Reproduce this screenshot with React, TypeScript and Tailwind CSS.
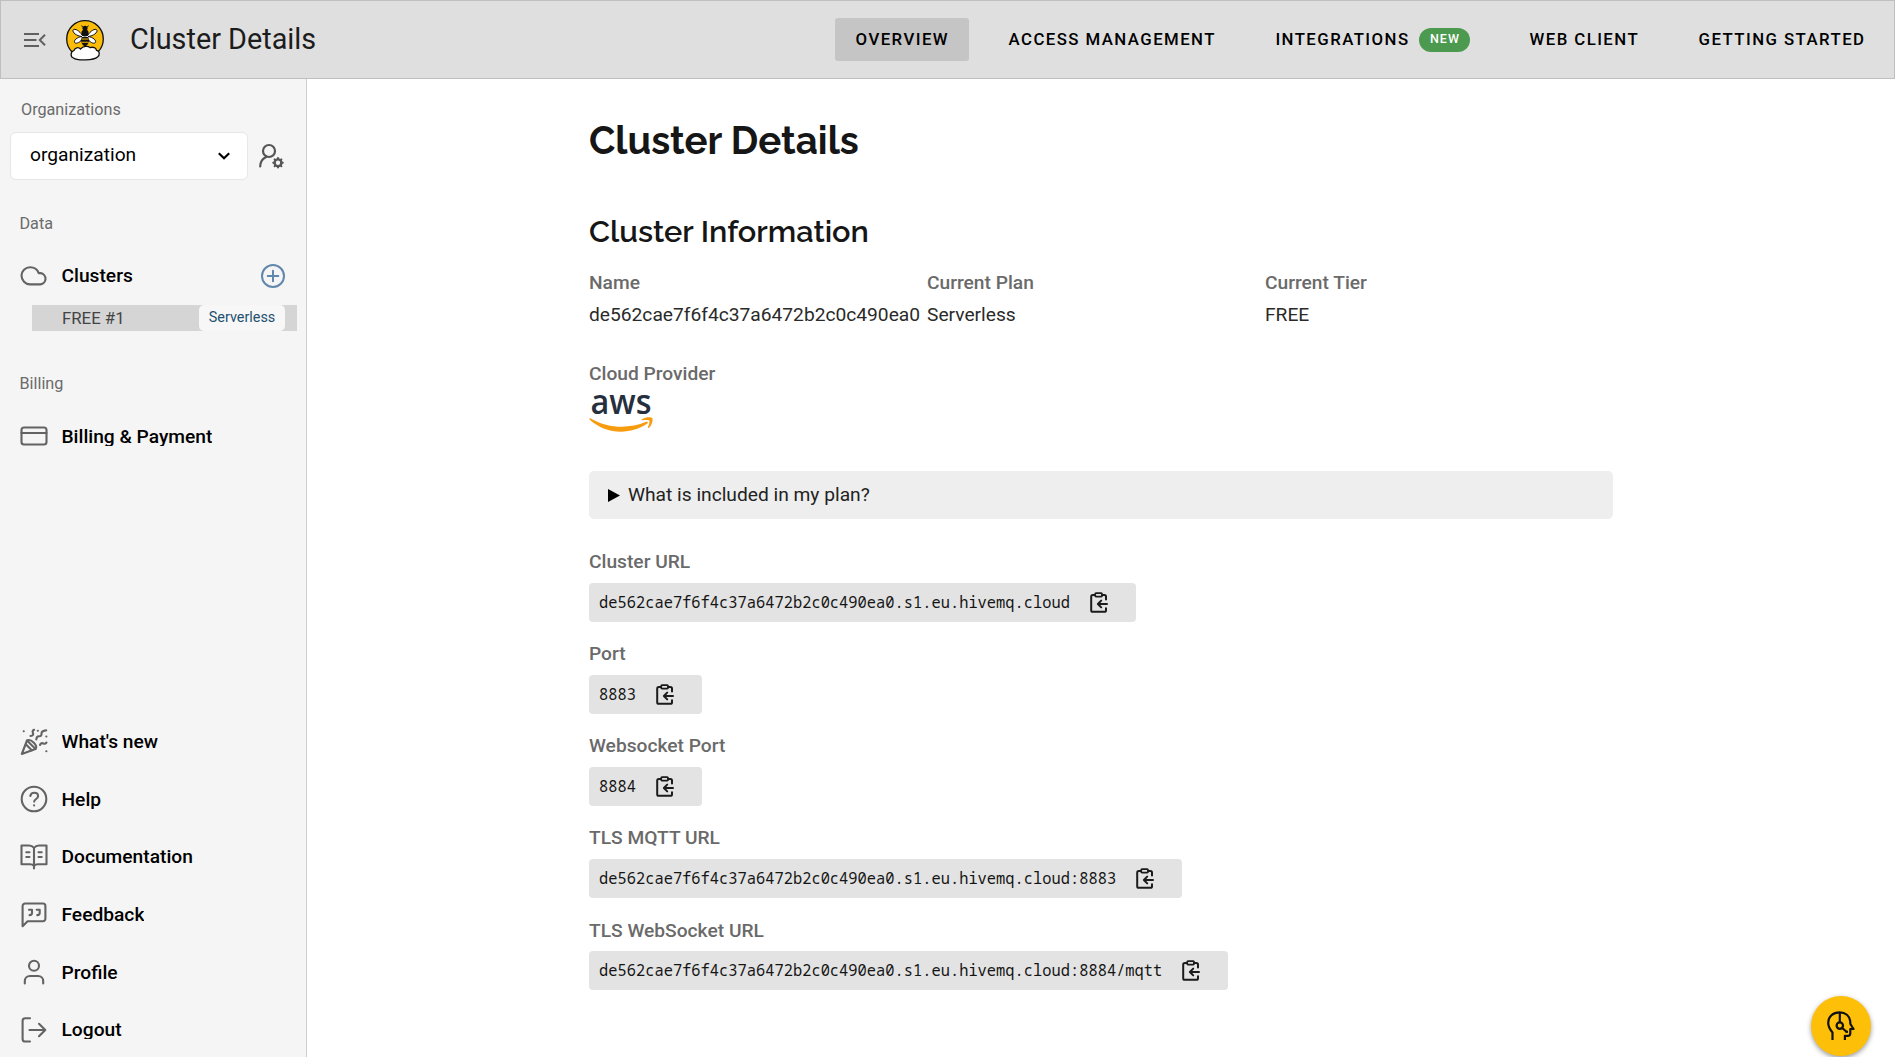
import type { ReactNode } from 'react';

function Svg({ children, className = '' }: { children: ReactNode; className?: string }) {
  return (
    <svg
      viewBox="0 0 28 28"
      className={`h-7 w-7 shrink-0 text-[#636363] ${className}`}
      fill="none"
      stroke="currentColor"
      strokeWidth="2.1"
      strokeLinecap="round"
      strokeLinejoin="round"
    >
      {children}
    </svg>
  );
}

const CloudIcon = () => (
  <Svg>
    <path d="M10 5.2C5.3 5.2 1.5 8.900 1.500 13.600S5.300 22.400 10 22.400h10.400a5.700 5.700 0 0 0 .3-11.300h-2C17.600 7.600 14.200 5.200 10 5.200z" />
  </Svg>
);

const CardIcon = () => (
  <Svg>
    <rect x="1.500" y="5.500" width="25" height="17" rx="2.500" />
    <path d="M1.500 11h25" />
  </Svg>
);

const PartyIcon = () => (
  <Svg>
    <path d="M1.800 26 7 12.500 15.500 21z" />
    <path d="M7 12.500c2-1.200 4.600 0 6.600 2s3.300 4.900 1.900 6.500M6 16.500l5.800 5.800" />
    <path d="M10.500 8c2.600-.3 3.200-1.600 2.400-3-.6-1.400 0-2.600 1.200-3.200M16.300 11.500c.2-2.400 1-3.300 2.800-3.200 1.900.1 2.500-1 2.400-2.700 0-1.800 1.300-3 4.700-3.200M20 17c.8-1.800 2-2.200 3.300-1.500 1.200.6 2.300.2 3.200-1" />
    <path d="M3.700 3.200h.1M17.800 2.800h.1M26.300 8.500h.1M26.300 23.300h.1" />
  </Svg>
);

const HelpIcon = () => (
  <Svg>
    <circle cx="14" cy="14" r="12.300" />
    <path d="M10.300 11c.4-2 1.900-3.200 3.900-3.200 2.200 0 3.900 1.400 3.900 3.400 0 2.700-3.900 2.900-3.900 5.400M14.100 20.400v.1" />
  </Svg>
);

const BookIcon = () => (
  <Svg>
    <path d="M14 4.800C12.800 3.300 11.300 2.500 9 2.500H1.500v18.800H10c2 0 3.300.6 4 1.700.7-1.100 2-1.700 4-1.700h8.500V2.500H19c-2.300 0-3.800.8-5 2.300zM14 4.800v20.700" />
    <path d="M6.300 9.300h3.200M6.300 14h3.200M18.500 9.300h3.200M18.500 14h3.200" />
  </Svg>
);

const FeedbackIcon = () => (
  <Svg>
    <path d="M2.600 25.200V5a2.500 2.500 0 0 1 2.500-2.500h17.800A2.500 2.500 0 0 1 25.400 5v12.700a2.500 2.500 0 0 1-2.500 2.500H7.600z" />
    <path d="M9 8.700h3v3.200c0 1.200-.8 2-2.400 2.200M16.700 8.700h3v3.200c0 1.200-.8 2-2.400 2.200" />
  </Svg>
);

const ProfileIcon = () => (
  <Svg>
    <circle cx="14" cy="7.800" r="5" />
    <path d="M4.800 25.500v-2.300c0-3 2.200-5.200 5.200-5.200h8c3 0 5.200 2.200 5.200 5.200v2.300" />
  </Svg>
);

const LogoutIcon = () => (
  <Svg>
    <path d="M10 2.300H5.200a2.600 2.600 0 0 0-2.600 2.600v18a2.600 2.600 0 0 0 2.600 2.600H10M9.500 14h15.800M19 7.800l6.300 6.200-6.300 6.200" />
  </Svg>
);

function CopyIcon() {
  return (
    <svg viewBox="0 0 18 21" className="h-[21px] w-[18px] shrink-0" fill="none" stroke="#1b1b1b" strokeWidth="2" strokeLinecap="round" strokeLinejoin="round">
      <path d="M5 3H2.800C1.800 3 1.200 3.700 1.200 4.600v13.600c0 .9.700 1.600 1.600 1.600h11.600c.9 0 1.600-.7 1.600-1.600v-2M12 3h2.400c.9 0 1.600.7 1.600 1.600v3" />
      <rect x="5.200" y="1.200" width="6.800" height="3.400" rx=".8" strokeWidth="1.800" />
      <path d="M17 12H8.300M11.200 8.600 7.900 12l3.300 3.400" />
    </svg>
  );
}

function BeeLogo() {
  return (
    <svg viewBox="0 0 40 42" className="h-[42px] w-10 shrink-0">
      <circle cx="20" cy="20" r="18.300" fill="#fbbc0a" stroke="#111" strokeWidth="1.300" />
      <path d="M17.500 16.500C14 11 9 9 8 11.200c-.7 2 3.200 5.800 9 6.300-5 .6-8.600 4-7.400 6 1.500 2 6.500-.6 8.300-4.500h4.200c1.800 3.900 6.800 6.500 8.300 4.500 1.200-2-2.400-5.400-7.400-6 5.800-.5 9.700-4.300 9-6.300-1-2.200-6-.2-9.500 5.300z" fill="#fff" stroke="#111" strokeWidth="1" />
      <path d="M18 8.500 16.600 6.500M22 8.500l1.400-2" stroke="#111" strokeWidth="1" />
      <circle cx="20" cy="9.300" r="2.500" fill="#111" />
      <ellipse cx="20" cy="14" rx="3.600" ry="3.600" fill="#111" />
      <path d="M16.800 18h6.400l1 3c0 3-2 5.400-4.200 6.800-2.200-1.400-4.200-3.800-4.200-6.800z" fill="#111" />
      <path d="M16.400 20h7.200M16.200 23.200h7.600" stroke="#fbbc0a" strokeWidth="1.100" />
      <path d="M8.500 39c-3-1-3.500-6 .5-7.500 1-3 4.500-3.800 6.500-1.500 2.500-3 7.500-3.400 9.500-1.400 3.500-1 6 .4 6.500 2.700 3.500.7 3.500 5 1 6.700-3.500 3.500-20.500 3.800-24 1z" fill="#fff" stroke="#111" strokeWidth="1.300" />
    </svg>
  );
}

function NavItem({ children, active = false }: { children: ReactNode; active?: boolean }) {
  return (
    <div
      className={`flex h-[43px] items-center whitespace-nowrap rounded-[3px] pr-[19.500px] pl-[21px] text-[16.800px] font-medium tracking-[1.440px] text-black ${
        active ? 'bg-[#c5c5c5]' : ''
      }`}
    >
      {children}
    </div>
  );
}

function SideItem({ icon, label, children }: { icon: ReactNode; label: string; children?: ReactNode }) {
  return (
    <div className="flex h-[57.650px] items-center pl-[19.500px]">
      {icon}
      <span className="ml-[14px] overflow-hidden text-[19.200px] leading-none font-medium text-black">{label}</span>
      {children}
    </div>
  );
}

const labelClass = 'h-[26px] text-[19.200px] leading-[26px] font-medium text-[#6a6a6a]';

function Info({ label, value }: { label: string; value: string }) {
  return (
    <div>
      <div className={labelClass}>{label}</div>
      <div className="mt-[6px] h-[26px] text-[19.200px] leading-[26px] text-[#2a2a2a]">{value}</div>
    </div>
  );
}

function CopyField({ label, value }: { label: string; value: string }) {
  return (
    <div className="h-[92.150px]">
      <div className={labelClass}>{label}</div>
      <div className="mt-[7.500px] flex h-[39px] w-fit items-center rounded-[4px] bg-[#e3e3e3] pr-7 pl-[10px]">
        <span className="font-['Noto_Sans_Mono','DejaVu_Sans_Mono',monospace] text-[15.400px] leading-[39px] text-[#151515]">{value}</span>
        <span className="ml-[20px]">
          <CopyIcon />
        </span>
      </div>
    </div>
  );
}

const host = 'de562cae7f6f4c37a6472b2c0c490ea0.s1.eu.hivemq.cloud';

export default function App() {
  return (
    <div className="flex h-[1057px] w-[1895px] flex-col overflow-hidden bg-white font-[Roboto,sans-serif]">
      <header className="flex h-[79px] shrink-0 items-center border border-[#bfbfbf] bg-[#dfdfdf] pr-[9px] pl-[23px]">
        <svg viewBox="0 0 22 16" className="h-4 w-[22px] shrink-0" fill="none" stroke="#606060" strokeWidth="2">
          <path d="M0 2h15M0 8h12.500M0 14h15M21 2.800 15.800 8l5.200 5.200" />
        </svg>
        <div className="ml-[19px] pt-px">
          <BeeLogo />
        </div>
        <div className="ml-[25px] text-[28.800px] text-[#1c1c1c]">Cluster Details</div>
        <nav className="ml-auto flex items-center gap-[19px]">
          <NavItem active>OVERVIEW</NavItem>
          <NavItem>ACCESS MANAGEMENT</NavItem>
          <NavItem>
            INTEGRATIONS
            <span className="ml-[9.500px] flex h-6 w-[51px] items-center justify-center rounded-full bg-[#4c9a4f] pl-px text-[12.500px] tracking-[1.100px] text-white">
              NEW
            </span>
          </NavItem>
          <NavItem>WEB CLIENT</NavItem>
          <NavItem>GETTING STARTED</NavItem>
        </nav>
      </header>

      <div className="flex min-h-0 flex-1">
        <aside className="flex w-[307px] shrink-0 flex-col border-r border-[#cfcfcf] bg-[#f5f5f5]">
          <div className="mt-[18px] h-[26px] pl-[21px] text-[16.200px] leading-[26px] text-[#6b6b6b]">Organizations</div>
          <div className="mt-[9px] flex h-12 items-center pl-[10px]">
            <div className="flex h-12 w-[238px] items-center justify-between rounded-[6px] border border-[#e4e8e8] bg-white pr-[17px] pl-[19px] text-[19.200px] text-black">
              <span className="-mt-px">organization</span>
              <svg viewBox="0 0 12 8" className="h-2 w-3" fill="none" stroke="#000" strokeWidth="2.200">
                <path d="M.8 1.200 6 6.300l5.200-5.100" />
              </svg>
            </div>
            <svg viewBox="0 0 26 26" className="ml-[10px] h-[26px] w-[26px]" fill="none" stroke="#555" strokeWidth="2.200" strokeLinecap="round">
              <circle cx="11" cy="8" r="6" />
              <path d="M2.200 23.500c.1-4.700 2.300-8 5.900-9.600" />
              <circle cx="20" cy="19.800" r="3.400" strokeWidth="2.400" />
              <path d="M20 15v.8M20 23.800v.8M15.200 19.800h.8M24 19.800h.8M16.600 16.400l.6.600M22.800 22.600l.6.600M16.600 23.200l.6-.6M22.800 17l.6-.6" strokeWidth="2" />
            </svg>
          </div>

          <div className="mt-[31px] h-[26px] pl-[19.500px] text-[16.200px] leading-[26px] text-[#6b6b6b]">Data</div>
          <div className="mt-[10px]">
            <SideItem icon={<CloudIcon />} label="Clusters">
              <svg viewBox="0 0 26 26" className="mr-[20.500px] ml-auto h-[26px] w-[26px]" fill="none" stroke="#6187ad" strokeWidth="2" strokeLinecap="round">
                <circle cx="13" cy="13" r="11" />
                <path d="M13 7.700v10.600M7.700 13h10.600" />
              </svg>
            </SideItem>
          </div>
          <div className="mt-[0.500px] ml-8 flex h-[38px] w-[265px] items-center justify-between bg-[#d5d5d5] pr-3 pl-[30px]">
            <span className="text-[16.800px] text-[#444]">FREE #1</span>
            <span className="flex h-[26px] w-[86px] items-center justify-center rounded-[5px] bg-[#f7f7f7] text-[14.400px] text-[#22506f]">Serverless</span>
          </div>

          <div className="mt-[40px] h-[26px] pl-[19.500px] text-[16.200px] leading-[26px] text-[#6b6b6b]">Billing</div>
          <div className="mt-[10.500px]">
            <SideItem icon={<CardIcon />} label="Billing & Payment" />
          </div>

          <div className="mt-[247.500px]">
            <SideItem icon={<PartyIcon />} label="What's new" />
            <SideItem icon={<HelpIcon />} label="Help" />
            <SideItem icon={<BookIcon />} label="Documentation" />
            <SideItem icon={<FeedbackIcon />} label="Feedback" />
            <SideItem icon={<ProfileIcon />} label="Profile" />
            <SideItem icon={<LogoutIcon />} label="Logout" />
          </div>
        </aside>

        <main className="w-[1024px] ml-[282px]">
          <h1 className="mt-[38px] h-12 font-[Raleway,Lato,sans-serif] text-[38.400px] leading-[48px] font-bold text-[#161616]">Cluster Details</h1>
          <h2 className="mt-[46px] h-[40px] font-[Raleway,Lato,sans-serif] text-[30.700px] leading-[40px] font-semibold text-[#161616]">Cluster Information</h2>
          <div className="mt-[19px] grid grid-cols-[338px_338px_338px]">
            <Info label="Name" value="de562cae7f6f4c37a6472b2c0c490ea0" />
            <Info label="Current Plan" value="Serverless" />
            <Info label="Current Tier" value="FREE" />
          </div>
          <div className={`mt-[33px] ${labelClass}`}>Cloud Provider</div>
          <svg viewBox="0 0 66 42" className="mt-[4px] h-[42px] w-[66px]">
            <text x="1.500" y="22.800" textLength="61" lengthAdjust="spacingAndGlyphs" fontFamily="'Open Sans', 'Noto Sans', sans-serif" fontSize="34.500" fontWeight="600" fill="#252f3e">
              aws
            </text>
            <path d="M.6 28.500c-.8-.8.200-1.700 1.200-1.100C20 37.700 39.500 38 57.200 30.800c1.400-.5 2.400.8 1.100 1.800C41 44.500 16.500 43.500.6 28.500z" fill="#f79c0e" />
            <path d="M52.800 28.300c3.200-2.400 9-2.600 10.400-1.400 1.200 1.600-.2 7.200-3.300 9.900-.7.600-1.300.2-1-.5.900-2 2.100-5.600 1.400-6.700-.8-1-4.700-.7-7-.4-.8.100-1.100-.5-.5-.9z" fill="#f79c0e" />
          </svg>
          <div className="mt-[38px] flex h-12 items-center rounded-[5px] bg-[#eee] pl-[19px] text-[19.200px] text-[#222]">
            <svg viewBox="0 0 12 13" className="mr-2 h-[13px] w-3">
              <path d="M0 0 12 6.500 0 13z" fill="#000" />
            </svg>
            What is included in my plan?
          </div>
          <div className="mt-[30px]">
            <CopyField label="Cluster URL" value={host} />
            <CopyField label="Port" value="8883" />
            <CopyField label="Websocket Port" value="8884" />
            <CopyField label="TLS MQTT URL" value={`${host}:8883`} />
            <CopyField label="TLS WebSocket URL" value={`${host}:8884/mqtt`} />
          </div>
        </main>
      </div>

      <button className="fixed top-[996px] left-[1811px] flex h-[60px] w-[60px] items-center justify-center rounded-full bg-[#fdbf07] shadow-[0_2px_5px_rgba(0,0,0,0.4)]">
        <svg viewBox="0 0 28 30" className="h-[30px] w-7" fill="none" stroke="#111" strokeWidth="2.200" strokeLinejoin="round">
          <path d="M5.500 29v-7.500C2.500 18 1.200 15.500 1.200 11.800 1.200 5.600 6 1.300 12.600 1.300c6 0 9.900 3.600 10.600 8.700l.2 3L26.500 18h-3.200v4.200c0 1.700-1 2.600-2.600 2.600h-2.800V29" />
          <path d="M12.800 1.500v9.800M15.500 17.200l4 3.600" />
          <circle cx="12.800" cy="14.600" r="3.200" />
          <path d="M18.500 20.800h2.500" />
        </svg>
      </button>
    </div>
  );
}
